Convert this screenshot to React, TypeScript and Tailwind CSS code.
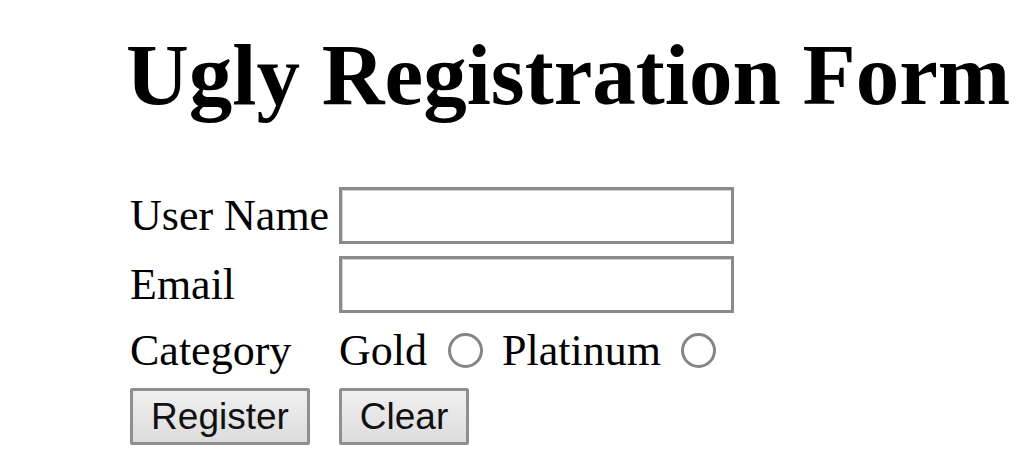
import React from "react";

const serif = { fontFamily: '"Liberation Serif", "Times New Roman", serif' };

function Radio() {
  return (
    <span className="inline-block w-[35px] h-[35px] rounded-full border-[3px] border-[#858585] bg-white box-border shrink-0" />
  );
}

function TextBox() {
  return (
    <div className="w-[395px] h-[57px] border-[3px] border-[#8a8a8a] bg-white box-border shadow-[inset_1px_1px_0_#d0d0d0]" />
  );
}

function Btn({ label, w }: { label: string; w: string }) {
  return (
    <button
      className={`${w} h-[57px] box-border border-[3px] border-[#8f8f8f] rounded-[2px] bg-gradient-to-b from-[#f0f0f0] to-[#dcdcdc] text-[37px] leading-none text-[#111] flex items-center justify-center`}
      style={{ fontFamily: '"Liberation Sans", Arial, sans-serif' }}
    >
      {label}
    </button>
  );
}

export default function App() {
  return (
    <div className="w-[1024px] h-[467px] bg-white overflow-hidden text-black pt-[25px] pl-[126px]" style={serif}>
      <h1 className="text-[87px] font-bold leading-[100px] m-0 whitespace-nowrap">Ugly Registration Form</h1>
      <div className="mt-[62px] ml-[4px] flex flex-col gap-[12px] text-[44px] leading-[51px]">
        <div className="flex items-center h-[57px]">
          <div className="w-[209px]">User Name</div>
          <TextBox />
        </div>
        <div className="flex items-center h-[57px]">
          <div className="w-[209px]">Email</div>
          <TextBox />
        </div>
        <div className="flex items-center h-[51px]">
          <div className="w-[209px]">Category</div>
          <div className="flex items-center">
            <span>Gold</span>
            <span className="ml-[21px] mr-[19px] flex"><Radio /></span>
            <span>Platinum</span>
            <span className="ml-[20px] flex"><Radio /></span>
          </div>
        </div>
        <div className="flex items-center h-[57px]">
          <div className="w-[209px]">
            <Btn label="Register" w="w-[180px]" />
          </div>
          <Btn label="Clear" w="w-[130px]" />
        </div>
      </div>
    </div>
  );
}
